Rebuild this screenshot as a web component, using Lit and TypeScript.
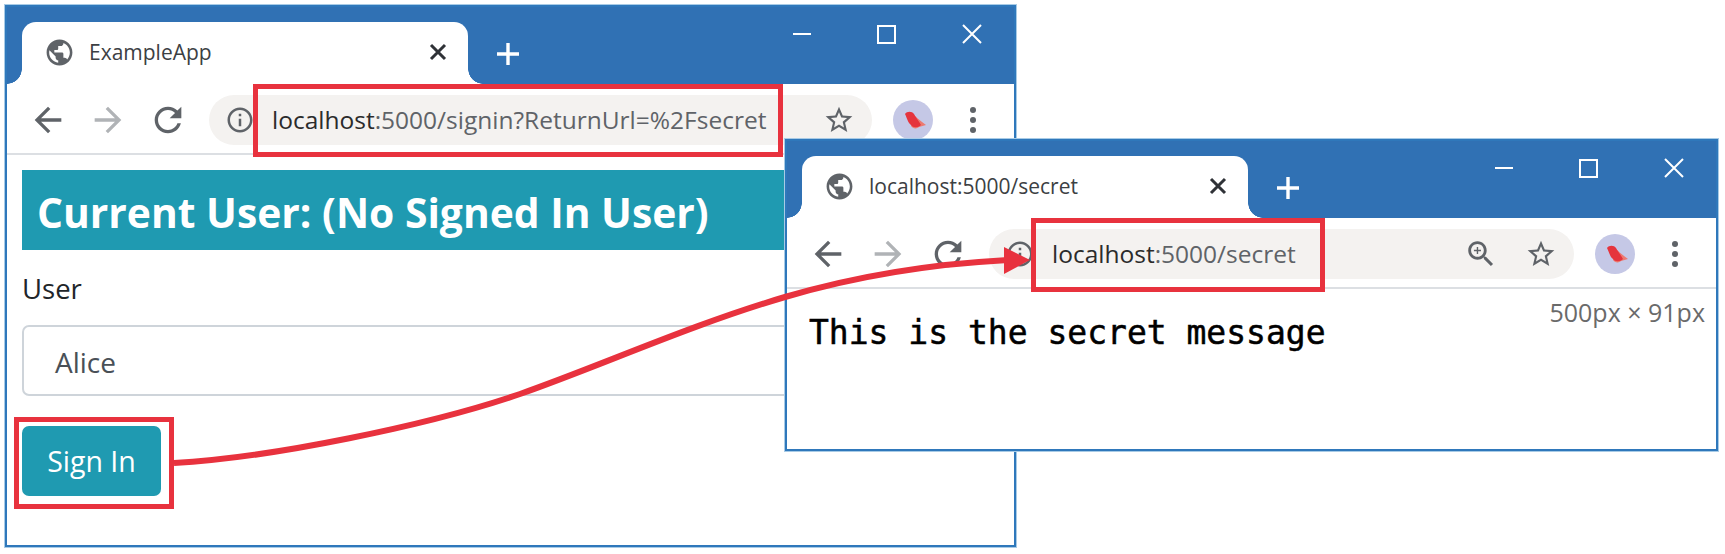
import { LitElement, html, css, svg } from 'lit';
import { customElement, property } from 'lit/decorators.js';

const icon = (size: number, d: string, fill = '#5f6368') => html`
  <svg width=${size} height=${size} viewBox="0 0 24 24" fill=${fill}>${svg`<path d=${d}></path>`}</svg>
`;

const GLOBE = 'M12 2C6.48 2 2 6.48 2 12s4.48 10 10 10 10-4.48 10-10S17.52 2 12 2zm-1 17.93c-3.95-.49-7-3.85-7-7.93 0-.62.08-1.21.21-1.79L9 15v1c0 1.1.9 2 2 2v1.93zm6.9-2.54c-.26-.81-1-1.39-1.9-1.39h-1v-3c0-.55-.45-1-1-1H8v-2h2c.55 0 1-.45 1-1V7h2c1.1 0 2-.9 2-2v-.41c2.93 1.19 5 4.06 5 7.41 0 2.08-.8 3.97-2.1 5.39z';
const ARROW_LEFT = 'M20 11H7.83l5.59-5.59L12 4l-8 8 8 8 1.41-1.41L7.83 13H20v-2z';
const ARROW_RIGHT = 'M12 4l-1.41 1.41L16.17 11H4v2h12.17l-5.58 5.59L12 20l8-8z';
const RELOAD = 'M17.65 6.35C16.2 4.9 14.21 4 12 4c-4.42 0-7.99 3.58-7.99 8s3.57 8 7.99 8c3.73 0 6.84-2.55 7.73-6h-2.08c-.82 2.33-3.04 4-5.65 4-3.31 0-6-2.69-6-6s2.69-6 6-6c1.66 0 3.14.69 4.22 1.78L13 11h7V4l-2.35 2.35z';
const INFO = 'M11 7h2v2h-2zm0 4h2v6h-2zm1-9C6.48 2 2 6.48 2 12s4.48 10 10 10 10-4.48 10-10S17.52 2 12 2zm0 18c-4.41 0-8-3.59-8-8s3.59-8 8-8 8 3.59 8 8-3.59 8-8 8z';
const STAR = 'M22 9.24l-7.19-.62L12 2 9.19 8.63 2 9.24l5.46 4.73L5.82 21 12 17.27 18.18 21l-1.63-7.03L22 9.24zM12 15.4l-3.76 2.27 1-4.28-3.32-2.88 4.38-.38L12 6.1l1.71 4.04 4.38.38-3.32 2.88 1 4.28L12 15.4z';
const ZOOM = 'M15.5 14h-.79l-.28-.27C15.41 12.59 16 11.11 16 9.5 16 5.91 13.09 3 9.5 3S3 5.91 3 9.5 5.91 16 9.5 16c1.61 0 3.09-.59 4.23-1.57l.27.28v.79l5 4.99L20.49 19l-4.99-5zm-6 0C7.01 14 5 11.99 5 9.5S7.01 5 9.5 5 14 7.01 14 9.5 11.99 14 9.5 14zM12 10h-2v2H9v-2H7V9h2V7h1v2h2v1z';

@customElement('browser-window')
class BrowserWindow extends LitElement {
  @property() tabTitle = '';
  @property() host = 'localhost';
  @property() path = '';
  @property({ type: Boolean }) zoomed = false;

  static styles = css`
    :host {
      display: flex;
      flex-direction: column;
      box-sizing: border-box;
      border: 2px solid #2f78bb;
      box-shadow: 0 0 0 1px #a8cbe6;
      background: #fff;
      font-family: "Open Sans", "Noto Sans", sans-serif;
      overflow: hidden;
    }
    .titlebar {
      flex: none;
      height: 77px;
      background: #3071b4;
      display: flex;
      align-items: flex-end;
    }
    .tab {
      position: relative;
      box-sizing: border-box;
      width: 446px;
      height: 62px;
      margin-left: 15px;
      padding: 0 21px 2px 22px;
      background: #fff;
      border-radius: 14px 14px 0 0;
      display: flex;
      align-items: center;
      gap: 14px;
      font-size: 21px;
      color: #3c4043;
    }
    .tab::before,
    .tab::after {
      content: '';
      position: absolute;
      bottom: 0;
      width: 15px;
      height: 15px;
    }
    .tab::before {
      left: -15px;
      background: radial-gradient(circle at 0 0, #3071b4 14.5px, #fff 15px);
    }
    .tab::after {
      right: -15px;
      background: radial-gradient(circle at 100% 0, #3071b4 14.5px, #fff 15px);
    }
    .tab-title {
      flex: 1;
      white-space: nowrap;
    }
    .plus {
      margin: 0 0 18px 28px;
      display: block;
    }
    .controls {
      margin-left: auto;
      align-self: flex-start;
      display: flex;
    }
    .control {
      width: 85px;
      height: 54px;
      display: flex;
      align-items: center;
      justify-content: center;
    }
    .toolbar {
      flex: none;
      box-sizing: border-box;
      height: 71px;
      padding: 2px 11px 0;
      border-bottom: 2px solid #dcdfe3;
      display: flex;
      align-items: center;
    }
    .cell {
      flex: none;
      width: 60px;
      display: flex;
      align-items: center;
      justify-content: center;
    }
    .pill {
      flex: 1;
      min-width: 0;
      height: 50px;
      margin: 0 11px;
      padding: 0 17px 0 16px;
      border-radius: 25px;
      background: #f4f2f0;
      display: flex;
      align-items: center;
    }
    .url {
      flex: 1;
      margin-left: 17px;
      font-size: 24.5px;
      color: #5f6368;
      white-space: nowrap;
    }
    .url b {
      font-weight: 400;
      color: #2b2b2b;
    }
    .zoom {
      margin-right: 27px;
      display: flex;
    }
    .avatar {
      width: 40px;
      height: 40px;
      border-radius: 50%;
      background: #c5c8e6;
      display: block;
    }
    .content {
      position: relative;
      flex: 1;
      min-height: 0;
    }
  `;

  render() {
    return html`
      <div class="titlebar">
        <div class="tab">
          ${icon(31, GLOBE)}
          <span class="tab-title">${this.tabTitle}</span>
          <svg width="18" height="18" viewBox="0 0 18 18" stroke="#2f3237" stroke-width="3" fill="none">
            <path d="M2 2l14 14M16 2L2 16"></path>
          </svg>
        </div>
        <svg class="plus" width="24" height="24" viewBox="0 0 24 24" stroke="#fff" stroke-width="3.4" fill="none">
          <path d="M12 1v22M1 12h22"></path>
        </svg>
        <div class="controls">
          <div class="control">
            <svg width="20" height="18" viewBox="0 0 20 18" stroke="#fff" stroke-width="2" fill="none"><path d="M1 9h18"></path></svg>
          </div>
          <div class="control">
            <svg width="19" height="19" viewBox="0 0 19 19" stroke="#fff" stroke-width="2" fill="none"><rect x="1" y="1" width="17" height="17"></rect></svg>
          </div>
          <div class="control">
            <svg width="20" height="20" viewBox="0 0 20 20" stroke="#fff" stroke-width="2" fill="none"><path d="M1 1l18 18M19 1L1 19"></path></svg>
          </div>
        </div>
      </div>
      <div class="toolbar">
        <div class="cell">${icon(40, ARROW_LEFT)}</div>
        <div class="cell">${icon(40, ARROW_RIGHT, '#b0b3b6')}</div>
        <div class="cell">${icon(40, RELOAD)}</div>
        <div class="pill">
          ${icon(30, INFO)}
          <span class="url"><b>${this.host}</b>${this.path}</span>
          ${this.zoomed ? html`<span class="zoom">${icon(34, ZOOM)}</span>` : ''}
          ${icon(32, STAR)}
        </div>
        <div class="cell">
          <svg class="avatar" viewBox="0 0 40 40">
            <path fill="#ec7a70" d="M22 16C25 19 29 22 33 25L26 27C24 29 20 29 18 26z"></path>
            <path fill="#e5343d" d="M12 14C14 11 19 11 21 14C23 18 26 21 28 25C25 28 20 28 18 25C15 23 14 18 12 14z"></path>
          </svg>
        </div>
        <div class="cell">
          <svg width="10" height="32" viewBox="0 0 10 32" fill="#5f6368">
            <circle cx="5" cy="6" r="3"></circle>
            <circle cx="5" cy="16" r="3"></circle>
            <circle cx="5" cy="26" r="3"></circle>
          </svg>
        </div>
      </div>
      <div class="content"><slot></slot></div>
    `;
  }
}

@customElement('app-root')
class AppRoot extends LitElement {
  static styles = css`
    :host {
      display: block;
      position: relative;
      width: 1725px;
      height: 554px;
      background: #fff;
      overflow: hidden;
      font-family: "Open Sans", "Noto Sans", sans-serif;
    }
    .first {
      position: absolute;
      left: 5px;
      top: 5px;
      width: 1011px;
      height: 542px;
    }
    .second {
      position: absolute;
      left: 785px;
      top: 139px;
      width: 933px;
      height: 312px;
    }
    .form {
      padding: 15px;
      display: flex;
      flex-direction: column;
      align-items: stretch;
    }
    .banner {
      height: 80px;
      padding-left: 15px;
      background: #1f9ab1;
      color: #fff;
      font-size: 40.8px;
      font-weight: 700;
      line-height: 84px;
      white-space: nowrap;
    }
    .label {
      margin-top: 20px;
      height: 55px;
      font-size: 27.5px;
      line-height: 38px;
      color: #212529;
    }
    .input {
      box-sizing: border-box;
      height: 71px;
      padding-left: 31px;
      border: 2px solid #ced4da;
      border-radius: 7px;
      font-size: 28px;
      line-height: 70px;
      color: #495057;
    }
    .button {
      align-self: flex-start;
      box-sizing: border-box;
      width: 139px;
      height: 70px;
      margin-top: 30px;
      border-radius: 7px;
      background: #1f9ab1;
      color: #fff;
      font-size: 28.5px;
      line-height: 70px;
      text-align: center;
    }
    .message {
      padding: 22px 22px 0;
      font-family: "DejaVu Sans Mono", "Liberation Mono", monospace;
      font-size: 33px;
      line-height: 44px;
      color: #000;
      white-space: pre;
      -webkit-text-stroke: 0.5px #000;
    }
    .size {
      position: absolute;
      right: 11px;
      top: 6px;
      font-size: 25px;
      color: #6a6a6a;
      white-space: nowrap;
    }
    .redbox {
      position: absolute;
      box-sizing: border-box;
      border: 5px solid #e8323e;
    }
    .box-url {
      left: 253px;
      top: 84px;
      width: 530px;
      height: 73px;
    }
    .box-secret {
      left: 1031px;
      top: 218px;
      width: 294px;
      height: 74px;
    }
    .box-signin {
      left: 14px;
      top: 417px;
      width: 160px;
      height: 92px;
    }
    .arrow {
      position: absolute;
      left: 0;
      top: 0;
      pointer-events: none;
    }
  `;

  render() {
    return html`
      <browser-window class="first" tabTitle="ExampleApp" path=":5000/signin?ReturnUrl=%2Fsecret">
        <div class="form">
          <div class="banner">Current User: (No Signed In User)</div>
          <div class="label">User</div>
          <div class="input">Alice</div>
          <div class="button">Sign In</div>
        </div>
      </browser-window>
      <div class="redbox box-url"></div>
      <div class="redbox box-signin"></div>

      <browser-window class="second" tabTitle="localhost:5000/secret" path=":5000/secret" zoomed>
        <div class="message">This is the secret message</div>
        <div class="size">500px × 91px</div>
      </browser-window>
      <div class="redbox box-secret"></div>

      <svg class="arrow" width="1725" height="554" viewBox="0 0 1725 554">
        <path d="M174 463C270 458 430 425 520 394C600 366 690 325 785 297C860 275 930 264 1008 260" fill="none" stroke="#e8323e" stroke-width="6"></path>
        <path d="M1030 260L1004 247V274z" fill="#e8323e"></path>
      </svg>
    `;
  }
}
